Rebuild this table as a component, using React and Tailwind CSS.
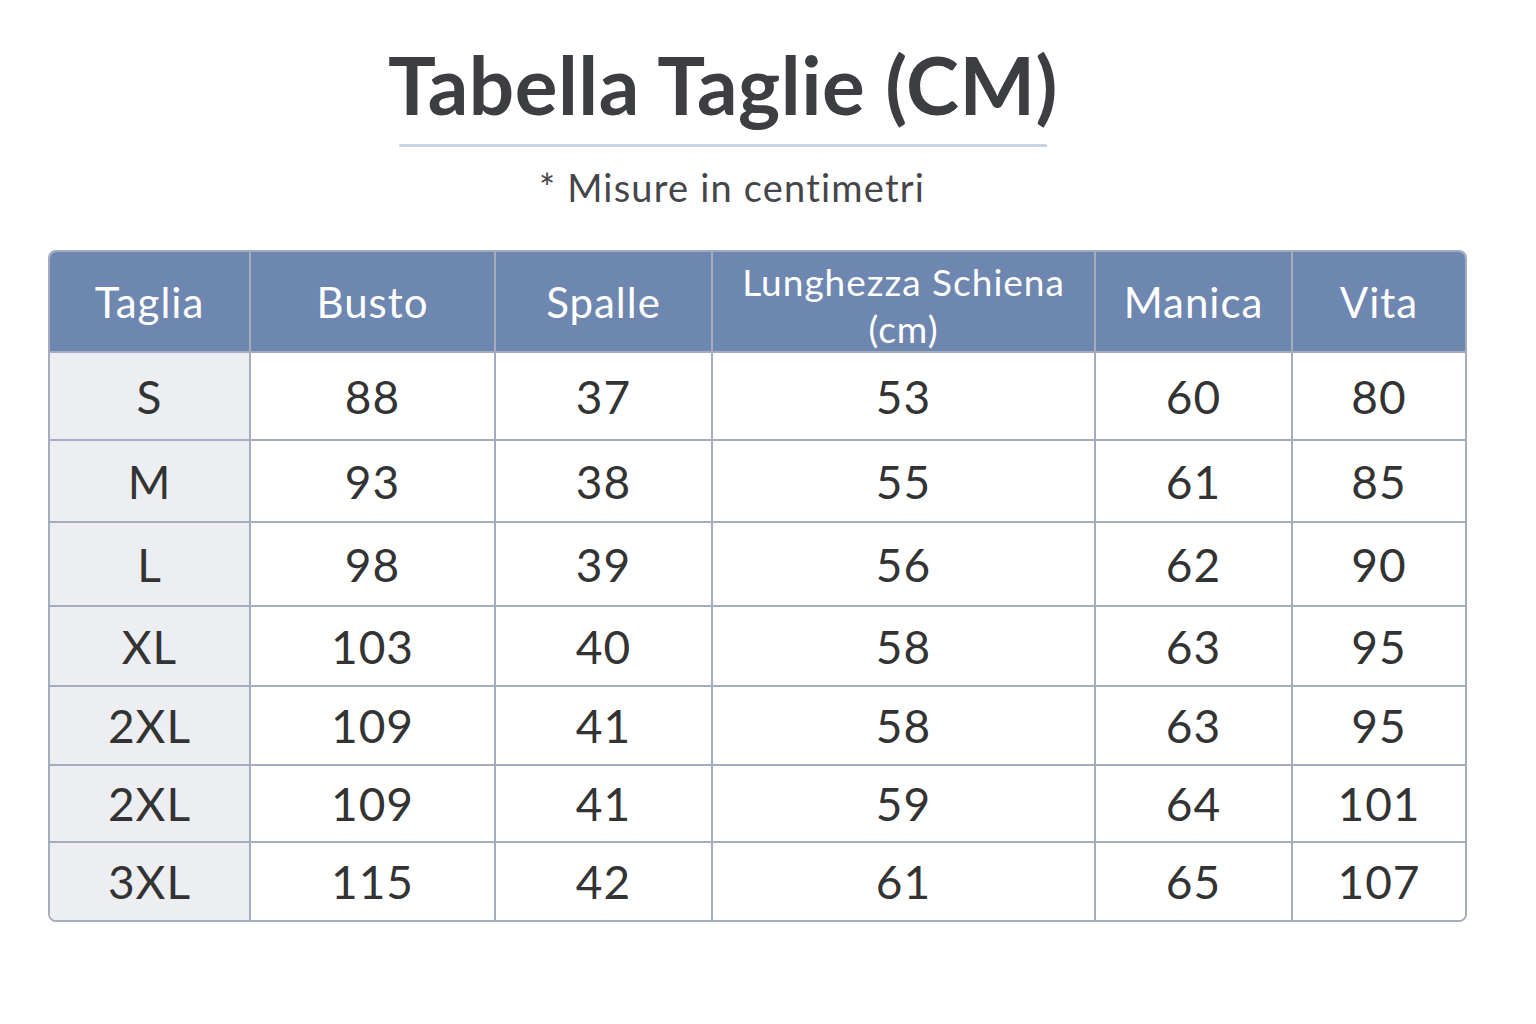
const COLS = ['Taglia', 'Busto', 'Spalle', 'Lunghezza Schiena (cm)', 'Manica', 'Vita'];

const ROWS = [
  { size: 'S', h: 'h-[88px]', v: ['88', '37', '53', '60', '80'] },
  { size: 'M', h: 'h-[82px]', v: ['93', '38', '55', '61', '85'] },
  { size: 'L', h: 'h-[84px]', v: ['98', '39', '56', '62', '90'] },
  { size: 'XL', h: 'h-[80px]', v: ['103', '40', '58', '63', '95'] },
  { size: '2XL', h: 'h-[79px]', v: ['109', '41', '58', '63', '95'] },
  { size: '2XL', h: 'h-[77px]', v: ['109', '41', '59', '64', '101'] },
  { size: '3XL', h: 'h-[77px]', v: ['115', '42', '61', '65', '107'] },
];

export default function App() {
  return (
    <div className="w-[1536px] h-[1024px] bg-white text-[#333] font-['Lato','Noto_Sans',sans-serif]">
      {/* title block */}
      <div className="flex justify-center pr-[90px] pt-[40px]">
        <div className="flex w-[648px] flex-col items-center">
          <h1 className="text-[80px] font-bold leading-none tracking-[0.5px] text-[#3d3e42] whitespace-nowrap pt-[4px] pb-[20px]">
            Tabella Taglie (CM)
          </h1>
          <div className="h-[3px] w-full rounded-full bg-[#c7d3e4]" />
          <p className="mt-[21px] text-[38px] leading-none tracking-[1.2px] text-[#45464a] pl-[18px]">
            * Misure in centimetri
          </p>
        </div>
      </div>

      {/* table */}
      <div className="mx-[48px] mt-[44px] w-[1419px] overflow-hidden rounded-[8px] border-2 border-[#a3adbd]">
        <div className="grid grid-cols-[201px_245px_217px_383px_197px_172px]">
          {COLS.map((c, i) => (
            <div
              key={c}
              className={`flex h-[101px] items-center justify-center bg-[#6e87b0] text-center text-white border-b-2 border-[#a3adbd] ${
                i < COLS.length - 1 ? 'border-r-2' : ''
              } ${i === 3 ? 'px-[16px] text-[37px] leading-[47px] tracking-[1px] pt-[6px]' : 'text-[42px] leading-none tracking-[1px]'}`}
            >
              {i === 3 ? <span className="max-w-[350px]">{c}</span> : c}
            </div>
          ))}
          {ROWS.map((r, ri) => (
            <div key={ri} className="contents">
              <div
                className={`flex ${r.h} items-center justify-center bg-[#eceef1] text-[46px] tracking-[1px] border-r-2 border-[#a3adbd] ${
                  ri < ROWS.length - 1 ? 'border-b-2' : ''
                }`}
              >
                {r.size}
              </div>
              {r.v.map((v, vi) => (
                <div
                  key={vi}
                  className={`flex ${r.h} items-center justify-center bg-white text-[46px] tracking-[1px] border-[#a3adbd] ${
                    vi < r.v.length - 1 ? 'border-r-2' : ''
                  } ${ri < ROWS.length - 1 ? 'border-b-2' : ''}`}
                >
                  {v}
                </div>
              ))}
            </div>
          ))}
        </div>
      </div>
    </div>
  );
}
